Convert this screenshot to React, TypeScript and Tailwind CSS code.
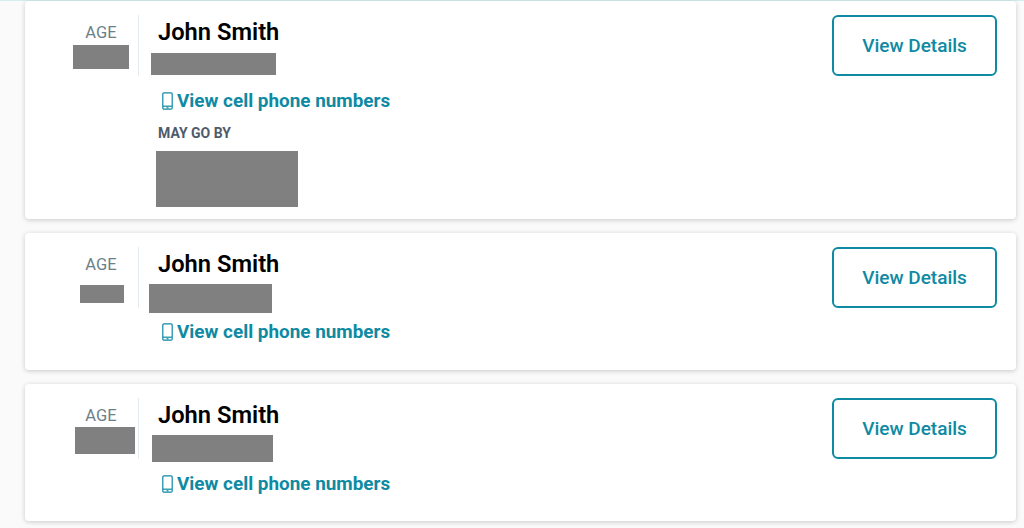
const people = [
  { ageBar: "w-[56px] h-[24px] mt-[3px] mr-[2px]", nameBar: "w-[125px] h-[22px] ml-[6px] mt-[8px]", linkGap: "mt-[14px]", cardHeight: "h-[218px]", alias: true },
  { ageBar: "w-[44px] h-[18px] mt-[11px]", nameBar: "w-[123px] h-[29px] ml-[4px] mt-[7px]", linkGap: "mt-[7px]", cardHeight: "h-[137px]", alias: false },
  { ageBar: "w-[60px] h-[27px] mt-[2px] ml-[6px]", nameBar: "w-[121px] h-[27px] ml-[7px] mt-[7px]", linkGap: "mt-[10px]", cardHeight: "h-[137px]", alias: false },
]

function PhoneIcon() {
  return (
    <svg width="11" height="18" viewBox="0 0 11 18" fill="none" stroke="#0e8aa3" strokeWidth="1.2" className="shrink-0">
      <rect x="0.8" y="0.8" width="9.4" height="16.4" rx="1.2" />
      <path d="M1 14.2H10" />
      <path d="M4.5 15.8H6.5" />
    </svg>
  )
}

export default function App() {
  return (
    <div
      className="w-[1024px] h-[528px] overflow-hidden bg-[#fafafa] text-[#0e8aa3]"
      style={{ fontFamily: "Roboto, sans-serif" }}
    >
      <div className="h-px bg-[#d5edf1]" />
      <div className="flex flex-col gap-[14px] pl-[25px] pr-[8px]">
        {people.map((person, index) => (
          <div
            key={index}
            className={`flex items-start justify-between bg-white rounded-[4px] shadow-[0_1px_5px_rgba(0,0,0,0.2)] pt-[14px] pl-[41px] pr-[19px] ${person.cardHeight}`}
          >
            <div className="flex items-start">
              <div className="flex flex-col items-center w-[73px] h-[61px] border-r border-[#e3ebee] pr-px">
                <span className="text-[16.5px] leading-[19px] mt-[8px] mr-[1px] text-[#6c7f88]">AGE</span>
                <div className={`bg-[#808080] ${person.ageBar}`} />
              </div>
              <div className="pl-[6px]">
                <div className="text-[23.7px] leading-[26px] mt-[4px] ml-[13px] font-semibold text-black">John Smith</div>
                <div className={`bg-[#808080] ${person.nameBar}`} />
                <a className={`flex items-center gap-[4px] ml-[17px] text-[18.9px] leading-[24px] font-bold text-[#0e8aa3] ${person.linkGap}`}>
                  <PhoneIcon />
                  View cell phone numbers
                </a>
                {person.alias && (
                  <>
                    <div className="text-[14px] leading-[16px] mt-[12px] ml-[13px] font-bold text-[#4f5b6b]">MAY GO BY</div>
                    <div className="w-[142px] h-[56px] ml-[11px] mt-[10px] bg-[#808080]" />
                  </>
                )}
              </div>
            </div>
            <button className="w-[165px] h-[61px] rounded-[6px] border-2 border-[#0e8aa3] bg-white pt-[2px] text-[19px] font-medium text-[#0e8aa3]">
              View Details
            </button>
          </div>
        ))}
      </div>
    </div>
  )
}
